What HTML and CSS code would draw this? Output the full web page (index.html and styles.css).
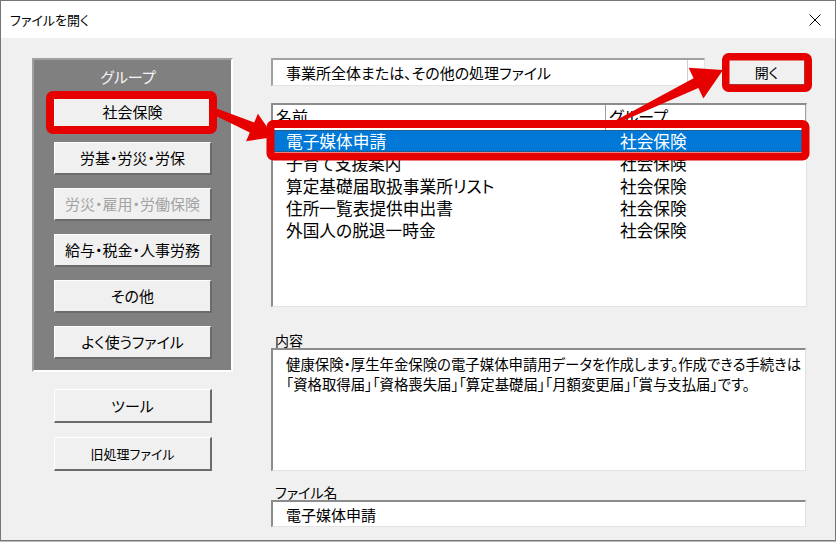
FILE: index.html
```html
<!DOCTYPE html>
<html lang="ja">
<head>
    <meta charset="UTF-8">
    <title>ファイルを開く</title>
    <link rel="stylesheet" href="styles.css">
</head>
<body>
    <div class="window">
        <div class="titlebar">
            <span class="title">ファイルを開く</span>
            <svg class="close" width="12" height="12" viewBox="0 0 12 12">
                <path d="M0.5 0.5 L11.5 11.5 M11.5 0.5 L0.5 11.5" stroke="#000" stroke-width="1" fill="none"/>
            </svg>
        </div>

        <div class="client">
            <div class="left">
                <div class="group-frame">
                    <div class="group-label">グループ</div>
                    <div class="btn">社会保険</div>
                    <div class="btn">労基・労災・労保</div>
                    <div class="btn disabled">労災・雇用・労働保険</div>
                    <div class="btn">給与・税金・人事労務</div>
                    <div class="btn">その他</div>
                    <div class="btn">よく使うファイル</div>
                </div>
                <div class="tools">
                    <div class="btn">ツール</div>
                    <div class="btn small">旧処理ファイル</div>
                </div>
            </div>

            <div class="right">
                <div class="top-row">
                    <div class="combo">
                        <span class="combo-text">事業所全体または、その他の処理ファイル</span>
                        <span class="drop"><span class="drop-arrow"></span></span>
                    </div>
                    <div class="btn open">開く</div>
                </div>

                <div class="listview">
                    <div class="lv-head">
                        <div class="h-name">名前</div>
                        <div class="h-group">グループ</div>
                    </div>
                    <div class="lv-row selected"><div class="c-name">電子媒体申請</div><div class="c-group">社会保険</div></div>
                    <div class="lv-row"><div class="c-name">子育て支援案内</div><div class="c-group">社会保険</div></div>
                    <div class="lv-row"><div class="c-name">算定基礎届取扱事業所リスト</div><div class="c-group">社会保険</div></div>
                    <div class="lv-row"><div class="c-name">住所一覧表提供申出書</div><div class="c-group">社会保険</div></div>
                    <div class="lv-row"><div class="c-name">外国人の脱退一時金</div><div class="c-group">社会保険</div></div>
                </div>

                <div class="field-label">内容</div>
                <div class="memo">健康保険・厚生年金保険の電子媒体申請用データを作成します。作成できる手続きは<br>「資格取得届」「資格喪失届」「算定基礎届」「月額変更届」「賞与支払届」です。</div>

                <div class="field-label second">ファイル名</div>
                <div class="textbox">電子媒体申請</div>
            </div>
        </div>

        <!-- annotation overlay -->
        <svg class="annot" width="836" height="541" viewBox="0 0 836 541">
            <g fill="none" stroke="#e60000">
                <rect x="50" y="95" width="163" height="35" rx="3" stroke-width="8"/>
                <rect x="270.5" y="124" width="535" height="32.5" rx="3" stroke-width="8"/>
                <rect x="725.75" y="56.75" width="82.5" height="31.5" rx="3" stroke-width="7.5"/>
            </g>
            <g fill="#e60000">
                <polygon points="217.4,108.8 254.2,122.5 257.9,113.7 274,137 246.1,141.3 249.8,132.5 214.6,115.2"/>
                <polygon points="611.3,122.7 693.6,78.2 688.6,67.8 723,70 703.4,98.4 698.4,88.0 612.7,125.3"/>
            </g>
        </svg>
    </div>
</body>
</html>
```

FILE: styles.css
```css
* {
    box-sizing: border-box;
}

body {
    margin: 0;
    background-color: #bdbdbd;
    color: #000;
    font-family: "Noto Sans CJK JP", sans-serif;
    font-feature-settings: "palt";
}

.window {
    position: relative;
    display: flex;
    flex-direction: column;
    width: 836px;
    height: 541px;
    border: 1px solid #767676;
    background-color: #f0f0f0;
}

.titlebar {
    display: flex;
    align-items: center;
    justify-content: space-between;
    flex: none;
    height: 37px;
    padding: 0 14px 0 9px;
    background-color: #fff;
}

.title {
    font-size: 13px;
    line-height: 18px;
}

.client {
    display: flex;
    flex: 1;
}

/* left side: group buttons */
.left {
    flex: none;
    width: 270px;
    padding: 20px 0 0 31px;
}

.group-frame {
    width: 201px;
    padding: 0 0 11px 20px;
    background-color: #808080;
    border: 2px solid;
    border-color: #a0a0a0 #fff #fff #a0a0a0;
}

.group-label {
    width: 158px;
    height: 36px;
    padding: 0 10px 3px 0;
    display: flex;
    align-items: center;
    justify-content: center;
    color: #f4f4f4;
    font-size: 15px;
}

.btn {
    display: flex;
    align-items: center;
    justify-content: center;
    width: 158px;
    height: 33px;
    background-color: #f0f0f0;
    border-style: solid;
    border-width: 1px 2px 2px 1px;
    border-color: #fff #6b6b6b #6b6b6b #fff;
    font-size: 15px;
    line-height: 20px;
    white-space: nowrap;
}

.group-frame .btn + .btn {
    margin-top: 13px;
}

.btn.disabled {
    color: #a3a3a3;
}

.btn.small {
    font-size: 13px;
}

.tools {
    display: flex;
    flex-direction: column;
    gap: 14px;
    margin: 17px 0 0 22px;
}

.tools .btn {
    height: 34px;
}

/* right side */
.right {
    display: flex;
    flex-direction: column;
    width: 536px;
    padding-top: 20px;
}

.top-row {
    display: flex;
    height: 28px;
}

.combo {
    display: flex;
    align-items: stretch;
    width: 434px;
    height: 28px;
    padding-left: 13px;
    background-color: #fff;
    border-style: solid;
    border-width: 2px 1px 1px 2px;
    border-color: #a0a0a0 #e3e3e3 #e3e3e3 #a0a0a0;
    font-size: 15px;
}

.combo-text {
    flex: 1;
    align-self: center;
    line-height: 20px;
    white-space: nowrap;
}

.drop {
    display: flex;
    align-items: center;
    justify-content: center;
    width: 17px;
    border-left: 1px solid #cfcfcf;
}

.drop-arrow {
    width: 0;
    height: 0;
    margin-top: -4px;
    border-left: 3px solid transparent;
    border-right: 3px solid transparent;
    border-top: 3px solid #333;
}

.btn.open {
    width: 78px;
    height: 28px;
    margin-left: 23px;
    font-size: 14px;
}

.listview {
    height: 204px;
    margin-top: 17px;
    background-color: #fff;
    border-style: solid;
    border-width: 2px 1px 1px 2px;
    border-color: #8c8c8c #e3e3e3 #e3e3e3 #8c8c8c;
    overflow: hidden;
}

.lv-head {
    display: flex;
    height: 25px;
    font-size: 16px;
    line-height: 22px;
}

.h-name {
    width: 333px;
    padding-left: 3px;
    border-right: 1px solid #a0a0a0;
}

.h-group {
    flex: 1;
    padding-left: 3px;
    border-right: 1px solid #a0a0a0;
}

.lv-row {
    display: flex;
    height: 22.3px;
    font-size: 16.7px;
    line-height: 22px;
    white-space: nowrap;
}

.lv-row.selected {
    background-color: #0078d7;
    color: #fff;
    outline: 1px dotted #444;
    outline-offset: -1px;
}

.c-name {
    width: 332px;
    padding-left: 13px;
}

.c-group {
    flex: 1;
    padding-left: 15px;
}

.field-label {
    height: 16px;
    margin-top: 25px;
    padding-left: 4px;
    font-size: 14px;
    line-height: 16px;
}

.field-label.second {
    margin-top: 13px;
}

.memo {
    width: 535px;
    height: 123px;
    padding: 4px 0 0 13px;
    background-color: #fff;
    border-style: solid;
    border-width: 2px 1px 1px 2px;
    border-color: #8c8c8c #e3e3e3 #e3e3e3 #8c8c8c;
    font-size: 14.4px;
    line-height: 20px;
    white-space: nowrap;
}

.textbox {
    display: flex;
    align-items: center;
    width: 535px;
    height: 27px;
    padding-left: 13px;
    background-color: #fff;
    border-style: solid;
    border-width: 2px 1px 1px 2px;
    border-color: #8c8c8c #e3e3e3 #e3e3e3 #8c8c8c;
    font-size: 15px;
}

.annot {
    position: absolute;
    left: -1px;
    top: -1px;
    pointer-events: none;
}
```
